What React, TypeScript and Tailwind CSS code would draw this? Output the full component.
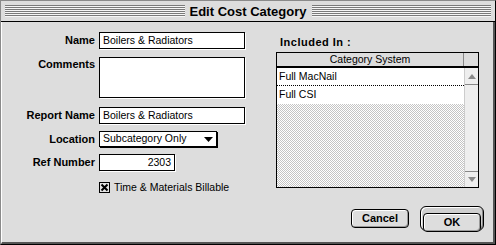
const stripes =
  "flex-1 h-[12px] bg-[repeating-linear-gradient(to_bottom,#7a7a7a_0_1px,#f6f6f6_1px_2px)]";

function Label({ children, top }: { children: string; top?: boolean }) {
  return (
    <div
      className={`w-[93px] text-right font-bold text-[11px] leading-[13px] ${
        top ? "self-start pt-[1px]" : "self-center"
      }`}
    >
      {children}
    </div>
  );
}

function Field({ value, w = "w-[146px]", right }: { value: string; w?: string; right?: boolean }) {
  return (
    <div
      className={`${w} h-[17px] bg-white border border-black shadow-[1px_1px_0_#ffffff] px-[3px] flex items-center text-[10.5px] ${
        right ? "justify-end" : ""
      }`}
    >
      {value}
    </div>
  );
}

function Arrow({ up }: { up?: boolean }) {
  return (
    <svg width="8" height="5" viewBox="0 0 8 5">
      <path d={up ? "M0 5 L4 0 L8 5 Z" : "M0 0 L8 0 L4 5 Z"} fill="#8a8a8a" />
    </svg>
  );
}

export default function App() {
  return (
    <div className="w-[496px] h-[245px] bg-[#dddddd] flex flex-col border-l border-t border-[#8a8a8a] border-r border-b border-r-black border-b-black font-['Liberation_Sans',Arial,sans-serif] text-black">
      {/* title bar */}
      <div className="h-[21px] flex items-center px-[4px] gap-[5px] border-b border-black">
        <div className={stripes} />
        <span className="font-bold text-[13px] leading-none">Edit Cost Category</span>
        <div className={stripes} />
      </div>

      <div className="flex-1 flex border-l border-white border-r-2 border-b-2 border-r-[#555555] border-b-[#555555]">
        {/* left form */}
        <div className="w-[274px] pt-[10px] flex flex-col">
          <div className="flex gap-[4px]">
            <Label>Name</Label>
            <Field value="Boilers & Radiators" />
          </div>
          <div className="flex gap-[4px] mt-[8px]">
            <Label top>Comments</Label>
            <div className="w-[146px] h-[41px] bg-white border border-black shadow-[1px_1px_0_#ffffff]" />
          </div>
          <div className="flex gap-[4px] mt-[9px]">
            <Label>Report Name</Label>
            <Field value="Boilers & Radiators" />
          </div>
          <div className="flex gap-[4px] mt-[7px]">
            <Label>Location</Label>
            <div className="w-[118px] h-[16px] bg-white border border-black shadow-[1px_1px_0_#000000] pl-[3px] pr-[3px] flex items-center justify-between text-[10.5px]">
              <span>Subcategory Only</span>
              <svg width="9" height="5" viewBox="0 0 9 5">
                <path d="M0 0 L9 0 L4.5 5 Z" fill="#000" />
              </svg>
            </div>
          </div>
          <div className="flex gap-[4px] mt-[7px]">
            <Label>Ref Number</Label>
            <Field value="2303" w="w-[76px]" right />
          </div>
          <div className="flex items-center gap-[4px] mt-[10px] pl-[97px]">
            <svg width="11" height="11" viewBox="0 0 11 11">
              <rect x="0.5" y="0.5" width="10" height="10" fill="#e4e4e4" stroke="#000" />
              <path d="M2.5 2.5 L8.5 8.5 M8.5 2.5 L2.5 8.5" stroke="#000" strokeWidth="2" />
            </svg>
            <span className="text-[10.5px] leading-[13px]">Time &amp; Materials Billable</span>
          </div>
        </div>

        {/* right side */}
        <div className="flex-1 flex flex-col pt-[14px]">
          <div className="pl-[4px] font-bold text-[11px] leading-[13px] tracking-[0.5px]">Included In :</div>
          <div className="mt-[3px] w-[203px] h-[136px] border border-black flex flex-col">
            <div className="flex h-[15px] border-b-2 border-black">
              <div className="flex-1 bg-[#dddddd] border-r border-[#888888] flex items-center justify-center text-[10.5px]">
                Category System
              </div>
              <div className="w-[14px] bg-[#dddddd]" />
            </div>
            <div className="flex-1 flex">
              <div className="flex-1 flex flex-col">
                <div className="h-[18px] bg-white border-b border-dotted border-black pl-[2px] flex items-center text-[10.5px]">
                  Full MacNail
                </div>
                <div className="h-[18px] bg-white pl-[2px] flex items-center text-[10.5px]">Full CSI</div>
                <div className="flex-1 bg-[repeating-conic-gradient(#c4c4c4_0_25%,#ffffff_0_50%)] bg-[length:2px_2px]" />
              </div>
              <div className="w-[14px] bg-[#eeeeee] border-l border-[#cccccc] flex flex-col justify-between">
                <div className="h-[17px] border-b border-[#888888] flex items-center justify-center">
                  <Arrow up />
                </div>
                <div className="h-[16px] border-t border-[#888888] flex items-center justify-center">
                  <Arrow />
                </div>
              </div>
            </div>
          </div>

          <div className="mt-[18px] pr-[9px] flex items-center justify-end gap-[11px]">
            <button className="w-[58px] h-[19px] rounded-[4px] border border-black bg-[#dddddd] shadow-[inset_1px_1px_0_#ffffff,inset_-1px_-1px_0_#999999] font-bold text-[11px] leading-none">
              Cancel
            </button>
            <div className="w-[64px] h-[25px] rounded-[6px] border border-black bg-[#cfcfcf] p-[2px] shadow-[inset_1px_1px_0_#ffffff,inset_-1px_-1px_0_#888888]">
              <button className="w-full h-full rounded-[4px] border border-black bg-[#dddddd] shadow-[inset_1px_1px_0_#ffffff,inset_-1px_-1px_0_#999999] font-bold text-[11px] leading-none">
                OK
              </button>
            </div>
          </div>
        </div>
      </div>
    </div>
  );
}
